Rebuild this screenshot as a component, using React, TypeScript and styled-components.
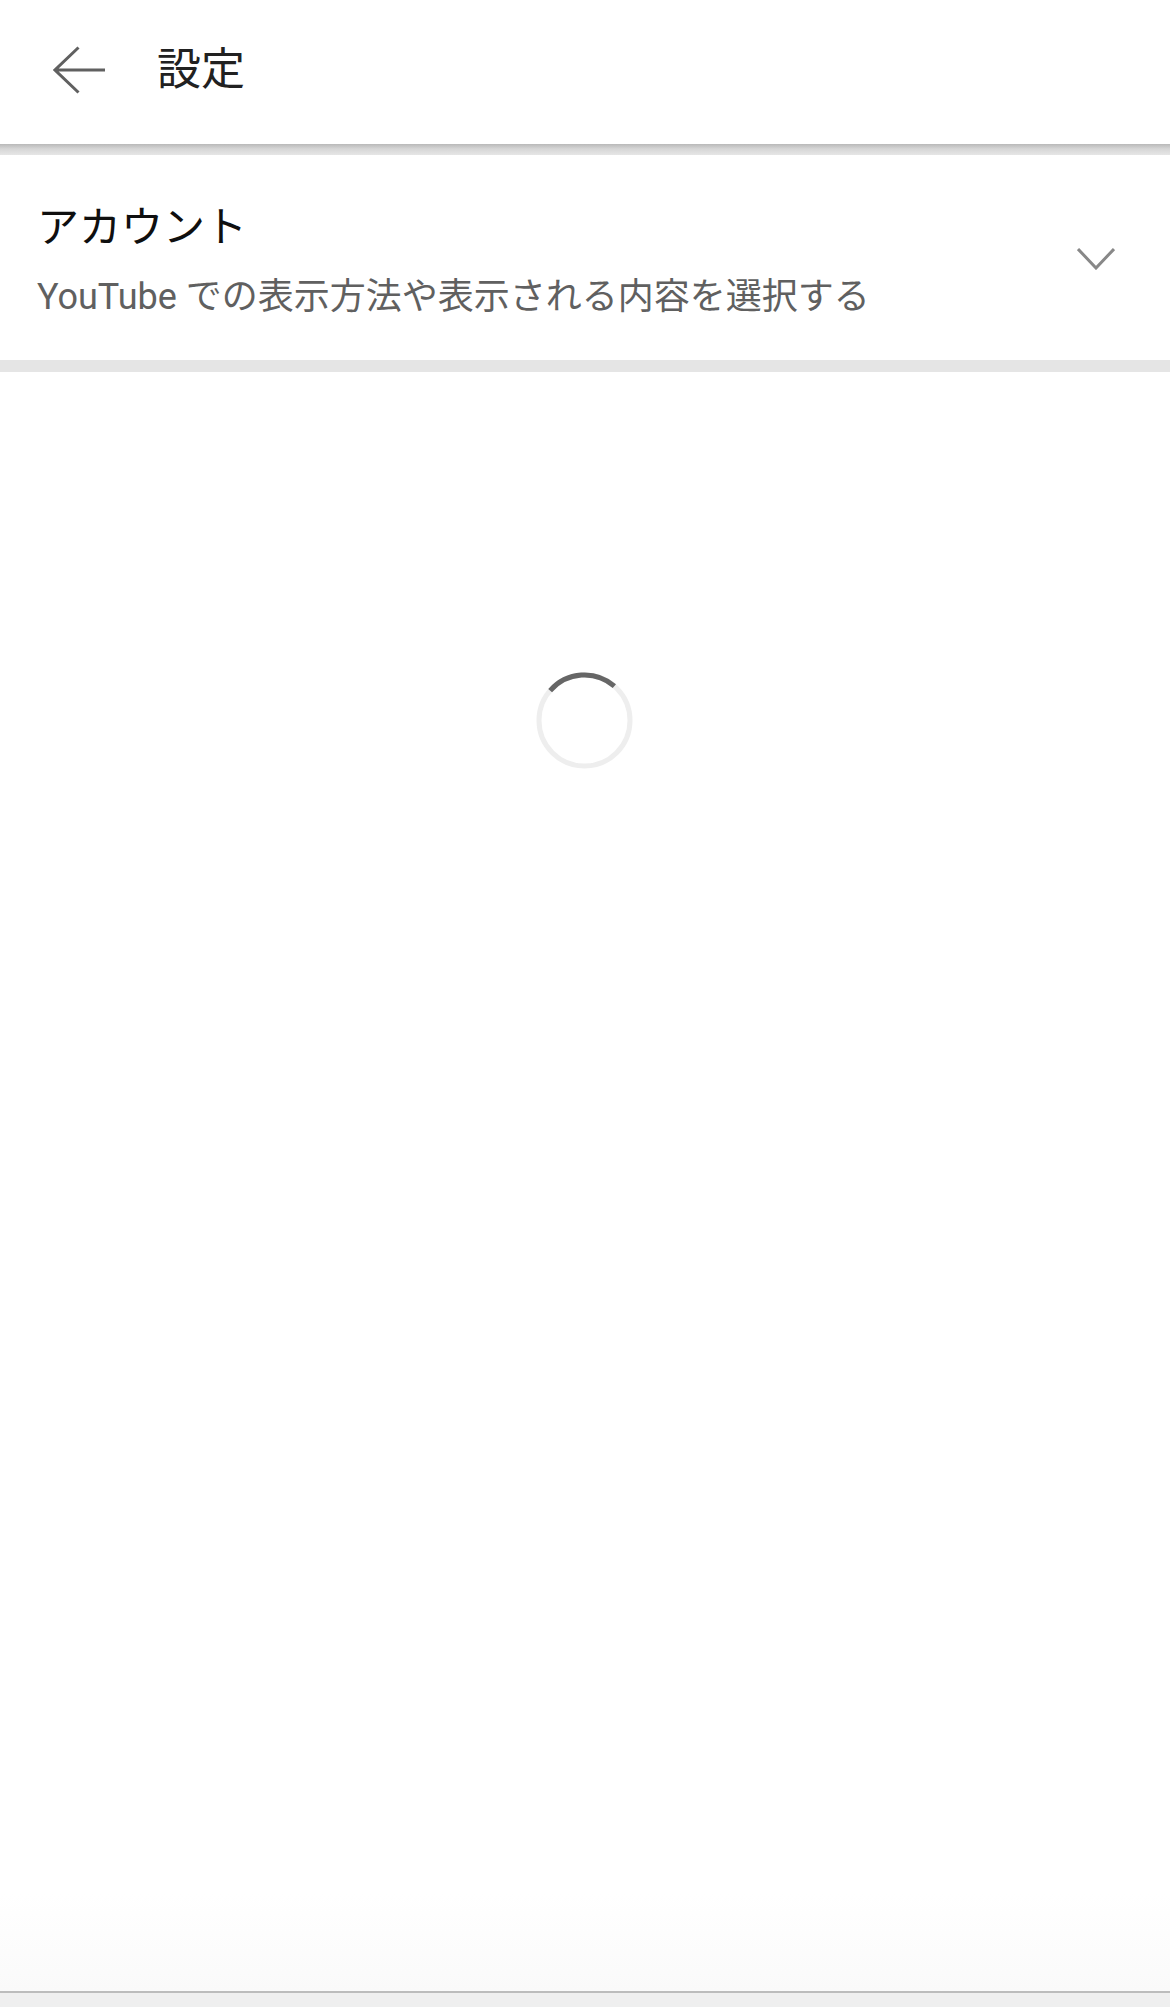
import styled, { createGlobalStyle } from 'styled-components';

const GlobalStyle = createGlobalStyle`
  html, body {
    margin: 0;
    padding: 0;
    background: #ffffff;
  }

  body {
    font-family: Roboto, "Noto Sans CJK JP", "Noto Sans", sans-serif;
  }
`;

const Page = styled.div`
  display: flex;
  flex-direction: column;
  min-height: 100vh;
  background: #ffffff;
`;

const Header = styled.header`
  display: flex;
  align-items: center;
  height: 144px;
  padding: 0 0 4px 53px;
  box-sizing: border-box;
  background: #ffffff;
`;

const BackButton = styled.button`
  display: flex;
  align-items: center;
  justify-content: center;
  width: 53px;
  height: 48px;
  padding: 0;
  border: none;
  background: transparent;
  cursor: pointer;
`;

const Title = styled.h1`
  margin: 0 0 0 51px;
  font-size: 44px;
  font-weight: 400;
  line-height: 52px;
  color: #212121;
`;

const HeaderShadow = styled.div`
  height: 11px;
  background: linear-gradient(to bottom, #b9b9b9 0%, #d6d6d6 45%, #e6e6e6 100%);
`;

const AccountRow = styled.div`
  display: flex;
  align-items: center;
  justify-content: space-between;
  padding: 48px 55px 41px 37px;
  background: #ffffff;
`;

const RowText = styled.div`
  display: flex;
  flex-direction: column;
  gap: 22px;
`;

const RowTitle = styled.div`
  font-size: 42px;
  line-height: 50px;
  color: #0f0f0f;
`;

const RowSubtitle = styled.div`
  font-size: 36px;
  line-height: 44px;
  color: #606060;
`;

const Chevron = styled.svg`
  margin-bottom: 4px;
`;

const Divider = styled.div`
  height: 12px;
  background: #e5e5e5;
`;

const Content = styled.main`
  flex: 1;
  display: flex;
  justify-content: center;
  align-items: flex-start;
  padding-top: 300px;
  background: linear-gradient(to bottom, #ffffff 0%, #ffffff 94%, #fafafa 100%);
`;

const Spinner = styled.svg`
  width: 97px;
  height: 97px;
  margin-left: -1px;
`;

const BottomBar = styled.div`
  height: 14px;
  border-top: 2px solid #bcbcbc;
  background: #efefef;
`;

const polar = (cx: number, cy: number, r: number, deg: number) => {
  const a = ((deg - 90) * Math.PI) / 180;
  return [cx + r * Math.cos(a), cy + r * Math.sin(a)];
};

const arcPath = (from: number, to: number) => {
  const [x1, y1] = polar(48.5, 48.5, 45.5, from);
  const [x2, y2] = polar(48.5, 48.5, 45.5, to);
  return `M ${x1} ${y1} A 45.5 45.5 0 0 1 ${x2} ${y2}`;
};

export default function App() {
  return (
    <>
      <GlobalStyle />
      <Page>
        <Header>
          <BackButton aria-label="戻る">
            <svg width="53" height="48" viewBox="0 0 53 48" fill="none">
              <path
                d="M52 24 H2 M25.5 1.5 L2 24 L25.5 46.5"
                stroke="#606060"
                strokeWidth="3"
                strokeLinecap="butt"
                strokeLinejoin="miter"
              />
            </svg>
          </BackButton>
          <Title>設定</Title>
        </Header>
        <HeaderShadow />
        <AccountRow>
          <RowText>
            <RowTitle>アカウント</RowTitle>
            <RowSubtitle>YouTube での表示方法や表示される内容を選択する</RowSubtitle>
          </RowText>
          <Chevron width="38" height="22" viewBox="0 0 38 22" fill="none">
            <path d="M1 1 L19 20 L37 1" stroke="#888888" strokeWidth="3" />
          </Chevron>
        </AccountRow>
        <Divider />
        <Content>
          <Spinner viewBox="0 0 97 97">
            <circle cx="48.5" cy="48.5" r="45.5" stroke="#eeeeee" strokeWidth="5" fill="none" />
            <path d={arcPath(-49, 41)} stroke="#666666" strokeWidth="5" fill="none" />
          </Spinner>
        </Content>
        <BottomBar />
      </Page>
    </>
  );
}
